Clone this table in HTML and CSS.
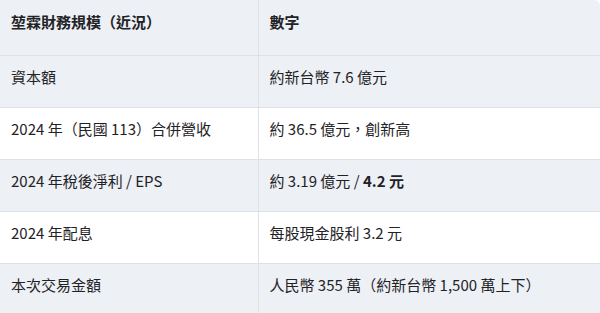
FILE: index.html
```html
<!DOCTYPE html>
<html lang="zh-Hant">
<head>
<meta charset="utf-8">
<link rel="stylesheet" href="styles.css">
</head>
<body>
<div class="wrap">
<table class="fin">
  <colgroup><col class="c1"><col class="c2"></colgroup>
  <thead>
    <tr><th>堃霖財務規模（近況）</th><th>數字</th></tr>
  </thead>
  <tbody>
    <tr class="alt"><td>資本額</td><td>約新台幣 7.6 億元</td></tr>
    <tr><td>2024 年（民國 113）合併營收</td><td>約 36.5 億元，創新高</td></tr>
    <tr class="alt"><td>2024 年稅後淨利 / EPS</td><td>約 3.19 億元 / <strong>4.2 元</strong></td></tr>
    <tr><td>2024 年配息</td><td>每股現金股利 3.2 元</td></tr>
    <tr class="alt"><td>本次交易金額</td><td>人民幣 355 萬（約新台幣 1,500 萬上下）</td></tr>
  </tbody>
</table>
</div>
</body>
</html>
```

FILE: styles.css
```css
html, body {
  margin: 0;
  padding: 0;
  background: #ffffff;
}
.wrap {
  width: 600px;
  height: 313px;
  overflow: hidden;
  border-top-right-radius: 6px;
}
.fin {
  width: 600px;
  border-collapse: collapse;
  table-layout: fixed;
  font-family: "Noto Sans CJK TC", "Noto Sans", sans-serif;
  font-size: 15px;
  line-height: 22px;
  color: #1f2328;
}
.c1 { width: 258px; }
.fin th, .fin td {
  text-align: left;
  vertical-align: top;
  padding: 10px 11px 19px 11px;
  border-bottom: 1px solid #dde1e6;
}
.fin th:first-child, .fin td:first-child {
  border-right: 1px solid #dde1e6;
}
.fin th {
  font-weight: 700;
  padding: 11px 11px 22px 11px;
  background: #edf0f4;
}
.fin tr.alt td {
  background: #edf0f4;
}
.fin strong {
  font-weight: 700;
}
```
